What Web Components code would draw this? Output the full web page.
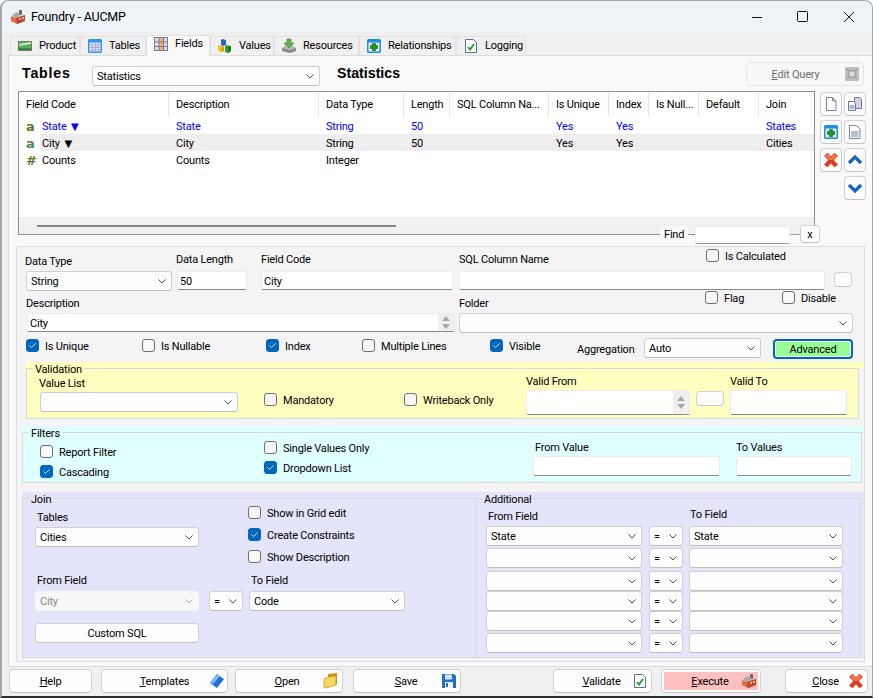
<!DOCTYPE html>
<html>
<head>
<meta charset="utf-8">
<title>Foundry - AUCMP</title>
<style>
  html, body { margin: 0; padding: 0; background: #fff; }
  body { font: 11px/16px Roboto, "Noto Sans", sans-serif; letter-spacing: -.2px; color: #000; }
</style>
</head>
<body>
<foundry-window></foundry-window>
<script>
const ICONS = {
  factory: `<path fill="#6d6d6d" d="M9 1h3v5H9z"/><path fill="#a9a9a9" d="M2 6l5-3 3 2v2L5 9z"/><path fill="#df6a45" d="M1 7l5 2 9-3v6l-8 3-6-3z"/><path fill="#b9482c" d="M6 9l1 6 8-3V6z"/><path fill="#f2b29c" d="M9 9h2v2H9zM12 8h2v2h-2z"/>`,
  product: `<rect x="1" y="3" width="14" height="10" fill="#6f7a6f"/><rect x="2" y="4" width="12" height="8" fill="#58b058"/><path fill="#c6e8c0" d="M2 6l12-2v2L2 8z"/><path fill="#2f8a3a" d="M2 10h12v2H2z"/>`,
  tables: `<rect x="1" y="1" width="14" height="14" rx="1.5" fill="#2f95ee"/><rect x="2.5" y="4.5" width="11" height="9" fill="#e6e6f6"/><path stroke="#a9a9dc" d="M2.5 7h11M2.5 9.500h11M2.5 12h11M5.500 4.500v9M8.500 4.500v9M11 4.500v9" fill="none"/>`,
  fields: `<rect x="1.500" y="1.500" width="13" height="13" fill="#dcdcec" stroke="#7c7c98"/><rect x="6" y="2" width="4.500" height="12" fill="#f6ac5c"/><path stroke="#7c7c98" d="M1.500 6h13M1.500 10.500h13M6 1.500v13M10.500 1.500v13" fill="none"/>`,
  values: `<path fill="#2a62d0" d="M5 1l4 1v5L6 8 4 7V2z"/><path fill="#f2c31c" d="M1 7l4 1v5l-2 1-2-1z"/><path fill="#d19c10" d="M5 8l2 1v4l-3 1z"/><path fill="#30a030" d="M9 7l5 1v5l-3 2-3-1V9z"/><path fill="#1b7a20" d="M11 9l3-1v5l-3 2z"/>`,
  resources: `<path fill="#b8b8b8" d="M1 10l4-3h6l4 3v3l-6 2-7-2z"/><path fill="#8a8a8a" d="M1 10l8 2 6-2v3l-6 2-8-2z"/><path fill="#5bb548" stroke="#3f8a32" stroke-width=".6" d="M6 1h4v4h3l-5 5-5-5h3z"/>`,
  relationships: `<rect x="1" y="1" width="14" height="14" rx="1.500" fill="#1e8fe8"/><rect x="2.500" y="4.500" width="11" height="9" fill="#e4e4f6"/><path fill="#11a011" stroke="#0a5a0a" stroke-width=".6" d="M6.500 5.500h3v2h2v3h-2v2h-3v-2h-2v-3h2z"/>`,
  logging: `<path fill="#fff" stroke="#5c6f98" d="M2.500 1.500h8l3 3v10h-11z"/><path stroke="#2fa32f" stroke-width="2" fill="none" d="M5 9l2 2.500L11 6"/>`,
  doc: `<path fill="#fff" stroke="#7487ab" d="M3.500 1.500h6l3.500 3.500v9.500h-9.500z"/><path fill="#d6deec" stroke="#7487ab" d="M9.500 1.500v3.500h3.500z"/>`,
  copy: `<path fill="#d8cfe8" stroke="#7c6ea8" d="M7.500 1.500h5l2 2v9h-7z"/><path fill="#fff" stroke="#66789e" d="M1.500 5.500h5l2 2v7h-7z"/><rect x="2.500" y="9" width="5" height="4" fill="#a8b6d0"/>`,
  docpanel: `<path fill="#fff" stroke="#7487ab" d="M2.500 1.500h7l3.500 3.500v9.500h-10.500z"/><rect x="4" y="7" width="7.500" height="6" fill="#b4c0d8"/>`,
  xred: `<path fill="#e23a22" stroke="#c23a1e" stroke-width=".6" d="M1.500 4l3-3 3.500 4 3.500-4 3 3-4 4 4 4.500-3 2.500-3.500-4-3.500 4-3-2.500 4-4.500z"/><path fill="#f47a4c" d="M2.500 4l2-2 3.500 4 3.500-4 2 2-4 4H6.500z"/>`,
  up: `<path fill="none" stroke="#0f66c4" stroke-width="3.200" d="M2 11l6-6 6 6"/>`,
  down: `<path fill="none" stroke="#0f66c4" stroke-width="3.200" d="M2 5l6 6 6-6"/>`,
  gray: `<rect x="1" y="1" width="14" height="14" rx="1" fill="#bdbdbd"/><circle cx="8" cy="8" r="3.500" fill="#dcdcdc" stroke="#8e8e8e"/><path stroke="#8e8e8e" d="M3 3l3 3m7-3l-3 3M3 13l3-3m7 3l-3-3"/>`,
  book: `<path fill="#1c74d6" d="M8 1l7 5-7 9-7-5z"/><path fill="#7fb6ee" d="M8 1l3 2-7 8-3-1z"/><path fill="#c9d4e2" d="M1 10l7 5 1 1-8-5z"/>`,
  folder: `<path fill="#c89a18" d="M5 1l9-1v11l-9 3z"/><path fill="#f6d860" stroke="#b98c12" stroke-width=".7" d="M1 6l3-1 1-1 8-1v9l-10 3-2-1z"/>`,
  floppy: `<path fill="#1f6fc8" d="M1 1h12l2 2v12H1z"/><rect x="4" y="1.500" width="7" height="5" fill="#cfe1f5"/><rect x="4" y="9" width="8" height="6" fill="#f2f6fb"/><rect x="5" y="10" width="2" height="4" fill="#1f6fc8"/>`
};

// every element below is only its css + markup, so keep them in one base class
class Part extends HTMLElement {
  connectedCallback() {
    if (this.shadowRoot) return;
    this.attachShadow({ mode: "open" }).innerHTML = `<style>${this.constructor.css}</style>${this.markup()}`;
  }
  markup() { return "<slot></slot>"; }
}

const part = (name, css, markup) => {
  customElements.define(name, class extends Part {
    static css = css;
    markup() { return markup ? markup(this) : "<slot></slot>"; }
  });
};

part("ui-icon", `:host { display: inline-flex; width: 16px; height: 16px; flex: none; } svg { width: 100%; height: 100%; display: block; }`,
  el => `<svg viewBox="0 0 16 16">${ICONS[el.getAttribute("name")]}</svg>`);

part("ui-combo", `
  :host { display: flex; align-items: center; box-sizing: border-box; height: 20px; padding: 0 5px 0 4px;
    background: #fefefe; border: 1px solid #d0d0d0; border-bottom-color: #c0c0c0; border-radius: 3px; }
  :host([disabled]) { background: #f8f8f8; border-color: #f8f8f8; color: #8a8a8a; }
  .v { flex: 1; white-space: nowrap; overflow: hidden; padding-top: 2px; }
  svg { width: 8px; height: 5px; flex: none; stroke: #555; fill: none; }
  :host([disabled]) svg { stroke: #bbb; }
`, () => `<span class="v"><slot></slot></span><svg viewBox="0 0 8 5"><path d="M.5.500l3.500 3.500 3.500-3.500"/></svg>`);

part("ui-input", `
  :host { display: flex; align-items: center; box-sizing: border-box; height: 19px; padding-left: 2px;
    background: #fff; border: 1px solid #ececec; border-bottom-color: #8a8a8a; border-radius: 2px; }
  .v { flex: 1; white-space: nowrap; padding-top: 2px; }
  .spin { display: none; flex-direction: column; justify-content: center; gap: 3px; align-items: center;
    width: 16px; align-self: stretch; background: #efefef; }
  :host([spinner]) .spin { display: flex; }
  i { width: 0; height: 0; border: 4px solid transparent; border-top: 0; border-bottom: 5px solid #a8a8a8; }
  i + i { border-bottom: 0; border-top: 5px solid #a8a8a8; }
`, () => `<span class="v"><slot></slot></span><span class="spin"><i></i><i></i></span>`);

part("ui-check", `
  :host { display: flex; align-items: center; gap: 6px; height: 13px; white-space: nowrap; }
  .b { box-sizing: border-box; width: 13px; height: 13px; flex: none; border: 1px solid #6f6f6f; border-radius: 3px;
    background: #f8f8f8; display: flex; align-items: center; justify-content: center; }
  :host([checked]) .b { background: #0067c0; border-color: #0067c0; }
  svg { display: none; width: 9px; height: 7px; stroke: #d5e8f8; fill: none; }
  :host([checked]) svg { display: block; }
  .t { padding-top: 2px; }
`, () => `<span class="b"><svg viewBox="0 0 9 7"><path d="M1.500 3.500l2 2 4-4"/></svg></span><span class="t"><slot></slot></span>`);

part("ui-btn", `
  :host { display: flex; box-sizing: border-box; height: 24px; position: relative; background: #fdfdfd;
    border: 1px solid #d2d2d2; border-bottom-color: #c4c4c4; border-radius: 4px; padding: 2px; }
  .in { flex: 1; display: flex; align-items: center; justify-content: center; background: var(--fill, transparent); padding-top: 2px; }
  :host([disabled]) { background: #f8f8f8; color: #6d6d6d; border-color: #e6e6e6; }
  :host([focus]) { border: 2px solid #0067c0; padding: 1px; }
  ui-icon { position: absolute; right: var(--ir, 2px); top: 50%; margin-top: -8px; }
  :host(.solo) { padding: 0; align-items: center; justify-content: center; }
  :host(.solo) ui-icon { position: static; margin: 0; }
`, el => {
  const icon = el.getAttribute("icon");
  const fill = el.getAttribute("fill");
  const style = fill ? ` style="--fill:${fill}"` : "";
  if (el.classList.contains("solo")) return `<ui-icon name="${icon}"></ui-icon>`;
  return `<span class="in"${style}><slot></slot></span>${icon ? `<ui-icon name="${icon}"></ui-icon>` : ""}`;
});

part("ui-field", `
  :host { display: block; }
  .l { display: block; margin: var(--top, 0) 0 var(--gap, 1px) var(--lx, 0); height: 16px; line-height: 18px; white-space: nowrap; }
`, el => `<span class="l">${el.getAttribute("label")}</span><slot></slot>`);

part("group-box", `
  :host { display: block; box-sizing: border-box; background: linear-gradient(var(--tone) 6px, transparent 6px); }
  fieldset { box-sizing: border-box; height: 100%; margin: 0 var(--mr, 0) 0 0; padding: 0; min-width: 0;
    border: 1px solid #d8d8d8; border-width: var(--bw, 1px); background: var(--tone); }
  legend { margin-left: 6px; padding: 0 2px; height: 13px; line-height: 15px; white-space: nowrap; }
`, el => `<fieldset><legend>${el.getAttribute("legend")}</legend><slot></slot></fieldset>`);

part("title-bar", `
  :host { display: flex; align-items: center; flex: none; height: 31px; background: #eef3f8; border-radius: 8px 8px 0 0; padding-left: 8px; font-size: 12.5px; }
  .t { margin-left: 5px; flex: 1; }
  .w { display: flex; width: 46px; height: 31px; align-items: center; justify-content: center; }
  svg { width: 12px; height: 12px; stroke: #111; fill: none; }
`, () => `<ui-icon name="factory"></ui-icon><span class="t">Foundry - AUCMP</span>
  <span class="w"><svg viewBox="0 0 12 12"><path d="M1 6.500h10"/></svg></span>
  <span class="w"><svg viewBox="0 0 12 12"><rect x=".5" y=".5" width="10" height="10" rx="1"/></svg></span>
  <span class="w"><svg viewBox="0 0 12 12"><path d="M1 1l10 10M11 1L1 11"/></svg></span>`);

part("tab-item", `
  :host { display: flex; align-items: center; box-sizing: border-box; height: 19px; gap: 6px; padding: 0 0 1px 6px;
    background: #f0f0f0; border: 1px solid #e2e2e2; border-bottom: 0; white-space: nowrap; }
  :host([active]) { height: 21px; padding-bottom: 4px; background: #f9f9f9; position: relative; top: 1px; z-index: 1; }
`, el => `<ui-icon name="${el.getAttribute("icon")}"></ui-icon><slot></slot>`);

part("tab-strip", `
  :host { display: flex; align-items: flex-end; flex: none; height: 23px; padding-left: 8px; background: #f0f0f0; }
`);

part("field-grid", `
  :host { display: flex; flex-direction: column; box-sizing: border-box; border: 1px solid #8f8f8f; background: #fff; height: 144px; }
  .r { display: grid; grid-template-columns: 21px 129px 150px 85px 46px 99px 60px 40px 50px 60px 1fr; height: 17px; line-height: 19px; white-space: nowrap; }
  .r.h { height: 25px; line-height: 26px; }
  .r span { padding-left: 7px; overflow: hidden; }
  .r span.n { padding-left: 2px; }
  .r.h span { box-shadow: inset -1px 0 0 #e4e4e4; margin-bottom: 1px; }
  .r.h span:first-child { grid-column: span 2; }
  .r.h span:last-child { box-shadow: none; }
  .r.sel span:not(.k) { background: #eee; }
  .blue { color: #00f; }
  .k { font: bold 13px/19px "DejaVu Sans", sans-serif; padding-left: 7px !important; color: #5d7c2a; }
  .sel .k { color: #4d8a58; }
  .tri { font: 10px/1 "DejaVu Sans", sans-serif; margin-left: 2px; }
  .fill { flex: 1; }
  .sb { height: 17px; background: #f0f0f0; display: flex; align-items: center; padding-left: 18px; }
  .sb i { display: block; width: 359px; height: 2px; background: #858585; margin-top: 1px; }
`, () => {
  const heads = ["Field Code", "Description", "Data Type", "Length", "SQL Column Na...", "Is Unique", "Index", "Is Null...", "Default", "Join"];
  const rows = [
    { cls: "blue", k: "a", tri: "▼", c: ["State", "State", "String", "50", "", "Yes", "Yes", "", "", "States"] },
    { cls: "sel", k: "a", tri: "▼", c: ["City", "City", "String", "50", "", "Yes", "Yes", "", "", "Cities"] },
    { cls: "", k: "#", c: ["Counts", "Counts", "Integer", "", "", "", "", "", "", ""] }
  ];
  return `<div class="r h">${heads.map(h => `<span>${h}</span>`).join("")}</div>` +
    rows.map(r => `<div class="r ${r.cls}"><span class="k">${r.k}</span>` +
      r.c.map((t, i) => i === 0
        ? `<span class="n">${t}${r.tri ? ` <b class="tri">${r.tri}</b>` : ""}</span>`
        : `<span>${t}</span>`).join("") + `</div>`).join("") +
    `<div class="fill"></div><div class="sb"><i></i></div>`;
});

part("fields-tab", `
  :host { display: block; box-sizing: border-box; flex: none; height: 612px; width: 864px;
    background: #f9f9f9; border: 1px solid #dcdcdc; border-right: 0; }
  .head { display: flex; height: 24px; margin-top: 6px; }
  .head b { font: bold 14.2px/24px "Liberation Sans", sans-serif; letter-spacing: 0; margin-top: -1px; }
  .head ui-combo { width: 228px; margin: 4px 0 0 0; }
  .gridrow { display: flex; margin: 5px 0 0 9px; }
  field-grid { width: 797px; }
  .side { display: grid; grid-template-columns: 22px 22px; grid-auto-rows: 24px; gap: 4px 2px; margin: 1px 0 0 5px; }
  .side ui-btn { height: 24px; }
  .find { display: flex; align-items: flex-start; margin: -10px 0 0 651px; height: 21px; }
  .find span { background: #f9f9f9; padding: 0 4px; margin-top: 1px; width: 20px; line-height: 18px; height: 16px; }
  .find ui-input { width: 95px; margin: 1px 0 0 7px; height: 18px; border-bottom-color: #a0a0a0; }
  .find .dash { width: 10px; height: 1px; margin-top: 9px; background: #a0a0a0; padding: 0; }
  .find ui-btn { width: 20px; height: 18px; padding: 0; margin-top: 0; }
  .lower { box-sizing: border-box; margin: 0 0 0 7px; width: 849px; height: 416px; background: #f4f4f4; border: 1px solid #dedede; }
  .a, .b, .c { display: grid; }
  .a { grid-template-columns: 151px 85px 198px 1fr; height: 44px; padding-left: 8px; }
  .b { grid-template-columns: 434px 1fr; height: 42px; padding-left: 8px; }
  .c { grid-template-columns: 116px 124px 96px 128px 87px 67px 129px 80px; height: 21px; padding-left: 9px; margin-top: 5px; align-items: start; }
  .c ui-check { margin-top: 1px; }
  .c span { margin-top: 3px; line-height: 18px; height: 16px; }
  .line { display: flex; align-items: flex-start; }
  .val { display: block; height: 57px; margin: 3px 0 0 9px; width: 838px; --tone: #ffffc0; --mr: 5px; }
  .valrow { display: grid; grid-template-columns: 225px 140px 122px 170px 34px 1fr; padding-left: 12px; align-items: start; }
  .fil { display: block; height: 57px; margin: 7px 0 0 5px; width: 842px; --tone: #e0ffff; --mr: 2px; }
  .filrow { display: grid; grid-template-columns: 224px 269px 203px 1fr; padding-left: 17px; align-items: start; }
  .stack { display: grid; grid-auto-rows: 13px; row-gap: 7px; }
  .join { display: flex; height: 166px; margin: 9px 0 0 5px; width: 842px; background: #e4e4fa; --tone: #e4e4fa; }
  .jl { width: 453px; }
  .jr { width: 386px; }
  .jl, .jr { height: 100%; }
  .jtop { display: flex; height: 67px; padding-left: 12px; }
  .jchecks { display: grid; grid-auto-rows: 13px; row-gap: 9px; margin: 1px 0 0 49px; align-content: start; }
  .jmid { display: flex; padding-left: 12px; }
  .jhead { display: flex; height: 21px; padding-left: 10px; }
  .jgrid { display: grid; grid-template-columns: 163px 40px 154px; grid-template-rows: 22px 23px 20px 20px 22px 20px; padding-left: 10px; }
  .jgrid ui-combo { height: 20px; }
  .jgrid ui-combo:nth-child(3n+1) { width: 156px; }
  .jgrid ui-combo:nth-child(3n+2) { width: 34px; }
`, () => {
  const rows = ["State", "", "", "", "", ""].map(v =>
    `<ui-combo>${v}</ui-combo><ui-combo>=</ui-combo><ui-combo>${v}</ui-combo>`).join("");
  return `
  <div class="head" style="padding-left:13px">
    <b style="width:70px;letter-spacing:.8px">Tables</b>
    <ui-combo>Statistics</ui-combo>
    <b style="margin-left:17px;width:409px">Statistics</b>
    <ui-btn disabled icon="gray" style="width:118px;--ir:3px"><span style="margin-right:19px"><u>E</u>dit Query</span></ui-btn>
  </div>
  <div class="gridrow">
    <field-grid></field-grid>
    <div class="side">
      <ui-btn class="solo" icon="doc"></ui-btn><ui-btn class="solo" icon="copy"></ui-btn>
      <ui-btn class="solo" icon="relationships"></ui-btn><ui-btn class="solo" icon="docpanel"></ui-btn>
      <ui-btn class="solo" icon="xred"></ui-btn><ui-btn class="solo" icon="up"></ui-btn>
      <span></span><ui-btn class="solo" icon="down"></ui-btn>
    </div>
  </div>
  <div class="find">
    <span>Find</span><ui-input></ui-input><span class="dash"></span><ui-btn>x</ui-btn>
  </div>
  <div class="lower">
    <div class="a">
      <ui-field label="Data Type" style="--top:6px;--gap:2px"><ui-combo style="width:146px;margin-left:1px">String</ui-combo></ui-field>
      <ui-field label="Data Length" style="--top:4px;--gap:4px"><ui-input style="width:70px;margin-left:1px">50</ui-input></ui-field>
      <ui-field label="Field Code" style="--top:4px;--gap:4px"><ui-input style="width:192px">City</ui-input></ui-field>
      <div>
        <div class="line" style="height:24px">
          <ui-field label="SQL Column Name" style="--top:4px;width:247px"></ui-field>
          <ui-check style="margin-top:2px">Is Calculated</ui-check>
        </div>
        <div class="line">
          <ui-input style="width:366px"></ui-input>
          <ui-btn style="width:18px;height:15px;margin:1px 0 0 9px"></ui-btn>
        </div>
      </div>
    </div>
    <div class="b">
      <ui-field label="Description" style="--top:4px;--gap:2px;--lx:1px"><ui-input spinner style="width:428px;margin-left:2px">City</ui-input></ui-field>
      <div>
        <div class="line" style="height:22px">
          <ui-field label="Folder" style="--top:4px;width:246px"></ui-field>
          <ui-check style="width:77px">Flag</ui-check>
          <ui-check>Disable</ui-check>
        </div>
        <ui-combo style="width:394px;height:20px"></ui-combo>
      </div>
    </div>
    <div class="c">
      <ui-check checked>Is Unique</ui-check>
      <ui-check>Is Nullable</ui-check>
      <ui-check checked>Index</ui-check>
      <ui-check>Multiple Lines</ui-check>
      <ui-check checked>Visible</ui-check>
      <span>Aggregation</span>
      <ui-combo style="width:117px">Auto</ui-combo>
      <ui-btn focus fill="#98fb98" style="height:20px;margin-top:1px">Advanced</ui-btn>
    </div>
    <group-box class="val" legend="Validation">
      <div class="valrow">
        <ui-field label="Value List" style="--gap:1px"><ui-combo style="width:198px;margin-left:1px"></ui-combo></ui-field>
        <ui-check style="margin-top:18px">Mandatory</ui-check>
        <ui-check style="margin-top:18px">Writeback Only</ui-check>
        <ui-field label="Valid From" style="--top:-2px;--gap:1px"><ui-input spinner style="width:164px;height:25px"></ui-input></ui-field>
        <ui-btn style="width:28px;height:15px;margin-top:16px"></ui-btn>
        <ui-field label="Valid To" style="--top:-2px;--gap:1px"><ui-input style="width:117px;height:25px"></ui-input></ui-field>
      </div>
    </group-box>
    <group-box class="fil" legend="Filters">
      <div class="filrow">
        <div class="stack" style="margin-top:6px"><ui-check>Report Filter</ui-check><ui-check checked>Cascading</ui-check></div>
        <div class="stack" style="margin-top:2px"><ui-check>Single Values Only</ui-check><ui-check checked>Dropdown List</ui-check></div>
        <ui-field label="From Value" style="--lx:2px"><ui-input style="width:187px;height:20px"></ui-input></ui-field>
        <ui-field label="To Values"><ui-input style="width:116px;height:20px"></ui-input></ui-field>
      </div>
    </group-box>
    <div class="join">
      <group-box class="jl" legend="Join" style="--bw:1px 0 1px 1px">
        <div class="jtop">
          <ui-field label="Tables" style="--top:4px;--gap:2px;--lx:2px"><ui-combo style="width:164px">Cities</ui-combo></ui-field>
          <div class="jchecks">
            <ui-check>Show in Grid edit</ui-check>
            <ui-check checked>Create Constraints</ui-check>
            <ui-check>Show Description</ui-check>
          </div>
        </div>
        <div class="jmid">
          <ui-field label="From Field" style="--gap:3px;--lx:2px;width:174px"><ui-combo disabled style="width:164px">City</ui-combo></ui-field>
          <ui-combo style="width:34px;margin:19px 6px 0 0">=</ui-combo>
          <ui-field label="To Field" style="--gap:3px;--lx:2px"><ui-combo style="width:156px">Code</ui-combo></ui-field>
        </div>
        <ui-btn style="width:164px;height:20px;margin:12px 0 0 12px;padding:0">Custom SQL</ui-btn>
      </group-box>
      <group-box class="jr" legend="Additional">
        <div class="jhead">
          <ui-field label="From Field" style="--top:3px;--lx:2px;width:204px"></ui-field>
          <ui-field label="To Field" style="--top:1px"></ui-field>
        </div>
        <div class="jgrid">${rows}</div>
      </group-box>
    </div>
  </div>`;
});

part("footer-bar", `
  :host { display: flex; flex: none; height: 24px; margin-top: 2px; padding-left: 7px; }
`);

part("foundry-window", `
  :host { display: flex; flex-direction: column; box-sizing: border-box; width: 873px; height: 698px; overflow: hidden;
    background: #f0f0f0; border: 1px solid #a6a6a6; border-left-width: 2px; border-bottom: 2px solid #2e2e2e; border-radius: 8px 8px 0 0; }
`, () => `
  <title-bar></title-bar>
  <tab-strip>
    <tab-item icon="product" style="width:70px">Product</tab-item>
    <tab-item icon="tables" style="width:66px">Tables</tab-item>
    <tab-item active icon="fields" style="width:64px">Fields</tab-item>
    <tab-item icon="values" style="width:64px">Values</tab-item>
    <tab-item icon="resources" style="width:85px">Resources</tab-item>
    <tab-item icon="relationships" style="width:97px">Relationships</tab-item>
    <tab-item icon="logging" style="width:70px">Logging</tab-item>
  </tab-strip>
  <fields-tab style="margin-left:6px"></fields-tab>
  <footer-bar>
    <ui-btn style="width:83px"><span><u>H</u>elp</span></ui-btn>
    <ui-btn icon="book" style="width:127px;margin-left:9px"><span><u>T</u>emplates</span></ui-btn>
    <ui-btn icon="folder" style="width:108px;margin-left:7px;--ir:3px"><span style="margin-right:4px"><u>O</u>pen</span></ui-btn>
    <ui-btn icon="floppy" style="width:108px;margin-left:10px;--ir:3px"><span style="margin-right:2px"><u>S</u>ave</span></ui-btn>
    <ui-btn icon="logging" style="width:99px;margin-left:92px;--ir:3px"><span style="margin-right:2px"><u>V</u>alidate</span></ui-btn>
    <ui-btn icon="factory" fill="#ffc0c0" style="width:100px;margin-left:9px;--ir:3px"><span style="margin-right:2px"><u>E</u>xecute</span></ui-btn>
    <ui-btn icon="xred" style="width:83px;margin-left:24px;--ir:3px"><span style="margin-right:2px"><u>C</u>lose</span></ui-btn>
  </footer-bar>
`);
</script>
</body>
</html>
